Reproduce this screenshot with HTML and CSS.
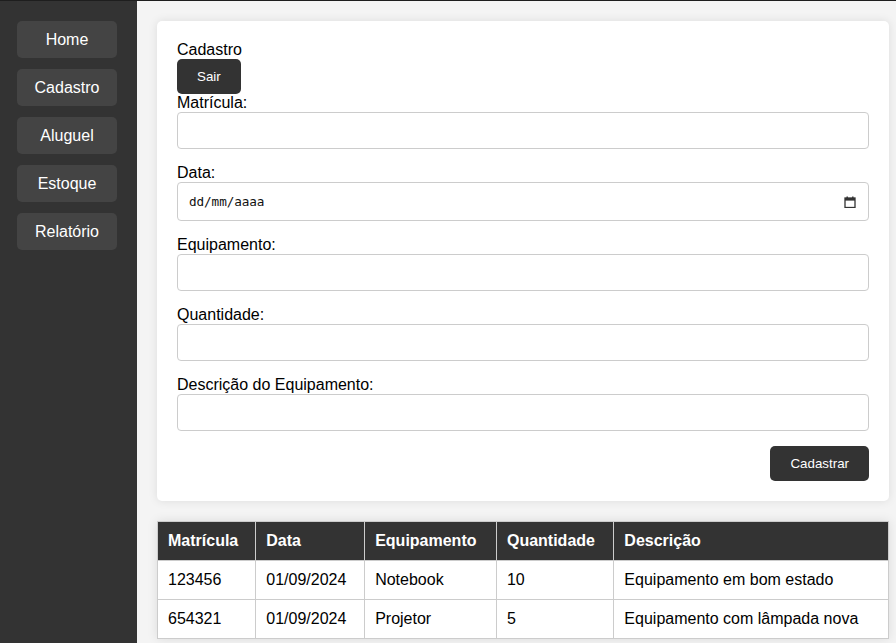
FILE: index.html
```html
<!DOCTYPE html>
<html lang="pt-BR">
<head>
<meta charset="utf-8">
<title>Cadastro</title>
<link rel="stylesheet" href="styles.css">
</head>
<body>
<div class="layout">
  <aside class="sidebar">
    <nav class="nav">
      <a class="nav-btn" href="#">Home</a>
      <a class="nav-btn" href="#">Cadastro</a>
      <a class="nav-btn" href="#">Aluguel</a>
      <a class="nav-btn" href="#">Estoque</a>
      <a class="nav-btn" href="#">Relatório</a>
    </nav>
  </aside>
  <main class="main">
    <section class="card">
      <div class="title">Cadastro</div>
      <button class="btn" type="button">Sair</button>
      <label class="label" for="matricula">Matrícula:</label>
      <input class="field" id="matricula" type="text">
      <label class="label" for="data">Data:</label>
      <div class="field date-field" id="data">
        <span class="date-text">dd/mm/aaaa</span>
        <svg class="cal-icon" width="12" height="12" viewBox="0 0 12 12">
          <rect x="1" y="2" width="10" height="9.5" fill="none" stroke="#333" stroke-width="1.3"/>
          <rect x="1" y="2" width="10" height="2.6" fill="#333"/>
          <rect x="2.5" y="0.5" width="1.4" height="2" fill="#333"/>
          <rect x="8.1" y="0.5" width="1.4" height="2" fill="#333"/>
        </svg>
      </div>
      <label class="label" for="equipamento">Equipamento:</label>
      <input class="field" id="equipamento" type="text">
      <label class="label" for="quantidade">Quantidade:</label>
      <input class="field" id="quantidade" type="text">
      <label class="label" for="descricao">Descrição do Equipamento:</label>
      <input class="field" id="descricao" type="text">
      <div class="actions">
        <button class="btn" type="button">Cadastrar</button>
      </div>
    </section>
    <table class="data-table">
      <thead>
        <tr>
          <th>Matrícula</th>
          <th>Data</th>
          <th>Equipamento</th>
          <th>Quantidade</th>
          <th>Descrição</th>
        </tr>
      </thead>
      <tbody>
        <tr>
          <td>123456</td>
          <td>01/09/2024</td>
          <td>Notebook</td>
          <td>10</td>
          <td>Equipamento em bom estado</td>
        </tr>
        <tr>
          <td>654321</td>
          <td>01/09/2024</td>
          <td>Projetor</td>
          <td>5</td>
          <td>Equipamento com lâmpada nova</td>
        </tr>
      </tbody>
    </table>
  </main>
</div>
</body>
</html>
```
FILE: styles.css
```css
* {
  box-sizing: border-box;
}

html, body {
  margin: 0;
  padding: 0;
}

body {
  font-family: "Liberation Sans", Arial, sans-serif;
  font-size: 16px;
  line-height: 18px;
  color: #000;
  border-top: 1px solid #1e1e1e;
  background: #f4f4f4;
  overflow: hidden;
}

.layout {
  display: flex;
  min-height: 642px;
}

.sidebar {
  width: 137px;
  flex: 0 0 137px;
  background: #333;
  padding: 20px 20px 20px 17px;
}

.nav {
  display: flex;
  flex-direction: column;
  gap: 11px;
}

.nav-btn {
  display: flex;
  align-items: center;
  justify-content: center;
  width: 100px;
  height: 37px;
  background: #444;
  color: #fff;
  text-decoration: none;
  border-radius: 5px;
  font-size: 16px;
}

.main {
  flex: 1;
  min-width: 0;
  background: #f4f4f4;
  padding: 20px 7px 20px 20px;
}

.card {
  background: #fff;
  padding: 20px;
  border-radius: 5px;
  box-shadow: 0 0 10px rgba(0, 0, 0, 0.1);
  margin-bottom: 20px;
}

.title {
  line-height: 18px;
}

.btn {
  display: block;
  background: #333;
  color: #fff;
  border: none;
  border-radius: 5px;
  padding: 10px 20px;
  height: 35px;
  font-family: "Liberation Sans", Arial, sans-serif;
  font-size: 13.33px;
  line-height: 15px;
  cursor: pointer;
}

.label {
  display: block;
  line-height: 18px;
}

.field {
  display: block;
  width: 100%;
  height: 37px;
  padding: 10px;
  margin: 0 0 15px 0;
  border: 1px solid #ccc;
  border-radius: 4px;
  background: #fff;
  font-family: "Liberation Sans", Arial, sans-serif;
  font-size: 13.33px;
}

.date-field {
  display: flex;
  align-items: center;
  justify-content: space-between;
  height: 39px;
  padding: 0 12px 0 11px;
}

.date-text {
  font-family: "DejaVu Sans Mono", "Liberation Mono", monospace;
  font-size: 12.7px;
  color: #111;
  letter-spacing: -0.1px;
}

.cal-icon {
  display: block;
  margin-top: 1px;
}

.actions {
  display: flex;
  justify-content: flex-end;
}

.data-table {
  width: 100%;
  border-collapse: collapse;
  background: #fff;
  box-shadow: 0 0 10px rgba(0, 0, 0, 0.1);
}

.data-table th,
.data-table td {
  border: 1px solid #ccc;
  padding: 10px;
  text-align: left;
  line-height: 18px;
  white-space: nowrap;
}

.data-table th {
  background: #333;
  color: #fff;
  font-weight: bold;
}
```
